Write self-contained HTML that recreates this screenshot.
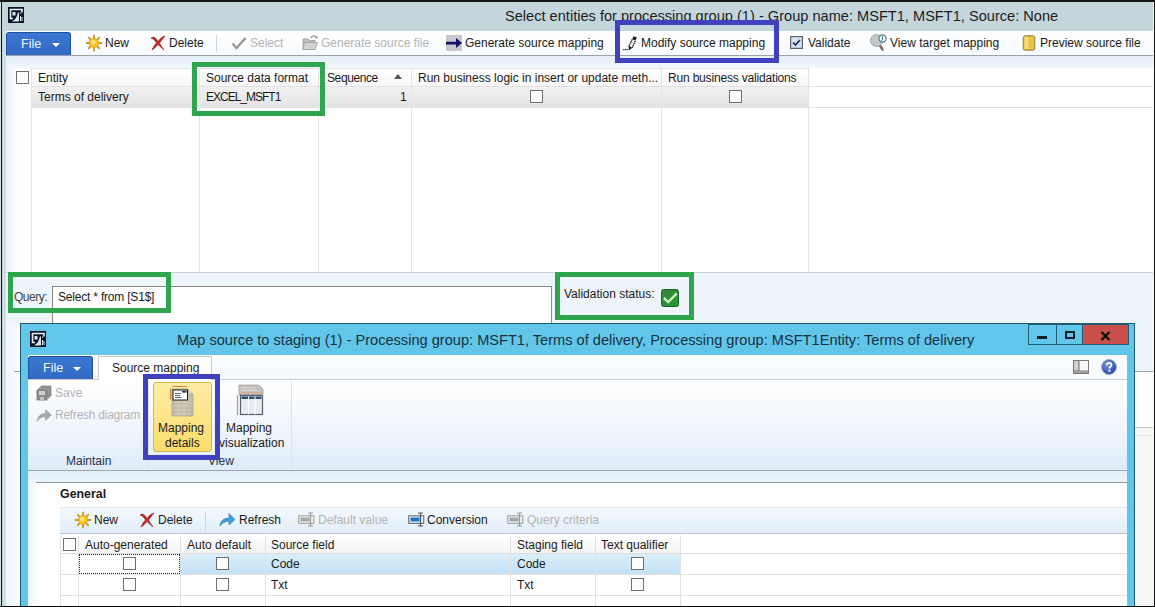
<!DOCTYPE html>
<html><head><meta charset="utf-8">
<style>
*{margin:0;padding:0;box-sizing:border-box}
html,body{width:1155px;height:607px;overflow:hidden;background:#fff}
body{position:relative;font-family:"Liberation Sans",sans-serif;font-size:12px;color:#1a1a1a}
.a{position:absolute}
.t{position:absolute;white-space:nowrap;line-height:14px}
.hl{position:absolute;height:1px}
.vl{position:absolute;width:1px}
.cb{position:absolute;width:13px;height:13px;border:1px solid #707070;background:#fff}
.gbox{position:absolute;border:5px solid #2ea650}
.bbox{position:absolute;border:5px solid #4141bf}
.dis{color:#b4b4b4}
</style></head><body>
<!-- outer frame -->
<div class="a" style="left:0;top:0;width:1155px;height:607px;background:#eef5fa"></div>
<!-- title bar -->
<div class="a" style="left:0;top:0;width:1155px;height:31px;background:#c4d6dc"></div>
<div class="t" style="left:505px;top:7px;font-size:14.6px;line-height:18px;color:#1d1d1d">Select entities for processing group (1) - Group name: MSFT1, MSFT1, Source: None</div>
<!-- app icon -->

<!-- toolbar -->
<div class="a" style="left:2px;top:31px;width:1151px;height:25px;background:linear-gradient(#ffffff,#f7fafd);border-bottom:1px solid #9aa3ab"></div>
<div class="a" style="left:6px;top:32px;width:65px;height:23px;background:linear-gradient(#3b78d2,#3169c4);border:1px solid #1f4f9e;border-bottom:none;border-radius:3px 3px 0 0"></div>
<div class="t" style="left:21px;top:37px;color:#eef6ff;font-size:12.5px">File</div>
<div class="a" style="left:52px;top:43px;width:0;height:0;border-left:4px solid transparent;border-right:4px solid transparent;border-top:4px solid #fff"></div>

<div class="t" style="left:105px;top:36px">New</div>
<div class="t" style="left:169px;top:36px">Delete</div>
<div class="vl" style="left:216px;top:35px;height:17px;background:#d0d5da"></div>
<div class="t dis" style="left:250px;top:36px">Select</div>
<div class="t dis" style="left:321px;top:36px">Generate source file</div>
<div class="t" style="left:465px;top:36px">Generate source mapping</div>
<div class="t" style="left:641px;top:36px">Modify source mapping</div>
<div class="t" style="left:808px;top:36px">Validate</div>
<div class="t" style="left:890px;top:36px">View target mapping</div>
<div class="t" style="left:1040px;top:36px">Preview source file</div>

<!-- content bg gradient below toolbar -->
<div class="a" style="left:2px;top:56px;width:1151px;height:12px;background:linear-gradient(#e3eef8,#f3f8fc)"></div>
<!-- left frame strip -->
<div class="a" style="left:0;top:0;width:1px;height:607px;background:#d8dfe3"></div><div class="a" style="left:1px;top:0;width:1px;height:607px;background:#141414"></div>
<div class="a" style="left:2px;top:31px;width:4px;height:576px;background:linear-gradient(90deg,#c4d5dc,#d6e3e9)"></div>
<div class="a" style="left:1153px;top:0;width:1px;height:607px;background:#f4f6f7"></div><div class="a" style="left:1154px;top:0;width:1px;height:607px;background:#141414"></div>
<div class="a" style="left:0;top:0;width:1155px;height:2px;background:#141414"></div>
<div class="a" style="left:0;top:606px;width:1155px;height:1px;background:#0a0a0a"></div>

<!-- grid -->
<div class="a" style="left:6px;top:68px;width:25px;height:205px;background:linear-gradient(90deg,#e6f1f8,#fbfdfe 10px,#fff)"></div>
<div class="a" style="left:31px;top:68px;width:1122px;height:205px;background:#fff"></div>
<div class="cb" style="left:16px;top:71px"></div>
<div class="a" style="left:31px;top:68px;width:777px;height:19px;background:linear-gradient(#ffffff,#f6f6f6);border-top:1px solid #e4e4e4;border-bottom:1px solid #dcdcdc"></div>
<div class="a" style="left:31px;top:87px;width:777px;height:20px;background:linear-gradient(#f1f1f1,#e3e3e3)"></div>
<div class="hl" style="left:31px;top:86px;width:1122px;background:#e2e2e2"></div>
<div class="hl" style="left:31px;top:107px;width:1122px;background:#e2e2e2"></div>
<div class="vl" style="left:31px;top:68px;height:205px;background:#e4e4e4"></div>
<div class="vl" style="left:199px;top:68px;height:205px;background:#e4e4e4"></div>
<div class="vl" style="left:318px;top:68px;height:205px;background:#e4e4e4"></div>
<div class="vl" style="left:411px;top:68px;height:205px;background:#e4e4e4"></div>
<div class="vl" style="left:661px;top:68px;height:205px;background:#e4e4e4"></div>
<div class="vl" style="left:808px;top:68px;height:205px;background:#e4e4e4"></div>
<div class="hl" style="left:2px;top:272px;width:1151px;background:#c9d0d6"></div>
<div class="t" style="left:38px;top:71px">Entity</div>
<div class="t" style="left:38px;top:90px">Terms of delivery</div>
<div class="t" style="left:206px;top:71px">Source data format</div>
<div class="t" style="left:206px;top:90px;letter-spacing:-1px">EXCEL_MSFT1</div>
<div class="t" style="left:327px;top:71px;letter-spacing:-0.4px">Sequence</div>
<div class="a" style="left:394px;top:74px;width:0;height:0;border-left:4px solid transparent;border-right:4px solid transparent;border-bottom:5px solid #555"></div>
<div class="t" style="left:400px;top:90px">1</div>
<div class="t" style="left:418px;top:71px">Run business logic in insert or update meth...</div>
<div class="t" style="left:668px;top:71px;letter-spacing:-0.18px">Run business validations</div>
<div class="cb" style="left:530px;top:90px"></div>
<div class="cb" style="left:729px;top:90px"></div>

<!-- below grid -->
<div class="a" style="left:6px;top:273px;width:1147px;height:334px;background:#eef5fa"></div>
<div class="t" style="left:14px;top:290px;color:#444;letter-spacing:-0.5px">Query:</div>
<div class="a" style="left:52px;top:286px;width:500px;height:60px;background:#fff;border:1px solid #8a8a8a"></div>
<div class="t" style="left:58px;top:290px;letter-spacing:-0.2px">Select * from [S1$]</div>
<div class="t" style="left:564px;top:287px">Validation status:</div>

<div class="a" style="left:1135px;top:372px;width:18px;height:235px;background:#f8f7f7"></div><div class="a" style="left:6px;top:324px;width:14px;height:283px;background:linear-gradient(90deg,#eef6fb,#fbfdfe)"></div><div class="hl" style="left:1135px;top:371px;width:18px;background:#9aa0a6"></div><div class="a" style="left:1135px;top:372px;width:18px;height:55px;background:#fdfdfc"></div><div class="hl" style="left:1135px;top:427px;width:18px;background:#c9c9c9"></div><div class="hl" style="left:14px;top:371px;width:6px;background:#9aa0a6"></div>
<div class="hl" style="left:1135px;top:435px;width:18px;background:#e2e2e2"></div>


<!-- ICONS -->
<svg class="a" style="left:8px;top:7px" width="16" height="16" viewBox="0 0 16 16">
<rect width="16" height="16" fill="#0b1428"/>
<path d="M2 2.5h12v3M2.5 2v9.5h2.5" stroke="#e6f0f5" stroke-width="1.6" fill="none"/>
<rect x="4.5" y="5" width="3" height="3.5" fill="#dde8ee"/>
<path d="M4 14.5C7 13 9 10 10 5.5L11 5.5 11 14.5Z" fill="#dbe7ee"/>
<rect x="12" y="9" width="1" height="5" fill="#e6f0f5"/><rect x="13.5" y="10" width="1" height="4" fill="#e6f0f5"/>
<rect x="12" y="5.5" width="1.2" height="1.2" fill="#e6f0f5"/>
</svg>
<svg class="a" style="left:85px;top:34px" width="18" height="18" viewBox="0 0 18 18">
<g stroke="#c8962a" stroke-width="1.8" stroke-linecap="round">
<path d="M9 1.5v3M9 13.5v3M1.5 9h3M13.5 9h3M3.7 3.7l2.1 2.1M12.2 12.2l2.1 2.1M3.7 14.3l2.1-2.1M12.2 5.8l2.1-2.1"/></g>
<circle cx="9" cy="9" r="4.6" fill="#f6c21c" stroke="#e5a50f" stroke-width="0.8"/>
<circle cx="8.3" cy="8.2" r="2.2" fill="#ffe680"/>
</svg>
<svg class="a" style="left:149px;top:35px" width="18" height="16" viewBox="0 0 18 16">
<path d="M2 3C5 1 7 3 9 6.5 11 3.5 13.5 1.5 16 1L10.5 8C12 10.5 13.5 13 15 15 12.5 13 10.5 11 9 9.5 7 12 5 14 3 15 4 12.5 5.5 10 7.5 8 6 5.5 4.5 3.5 2 3Z" fill="#c42a2a" stroke="#8a1b1b" stroke-width="0.6"/>
</svg>
<svg class="a" style="left:231px;top:36px" width="16" height="14" viewBox="0 0 16 14">
<path d="M1.5 7.5L5.5 12 14.5 2" stroke="#999" stroke-width="2.6" fill="none" stroke-linejoin="round"/>
</svg>
<svg class="a" style="left:302px;top:34px" width="17" height="17" viewBox="0 0 17 17">
<path d="M1 5h5l1.5 1.5H13v9H1Z" fill="#bdbdbd" stroke="#9a9a9a" stroke-width="0.8"/>
<path d="M2.5 8.5h13L13 15.5H1Z" fill="#d2d2d2" stroke="#a0a0a0" stroke-width="0.8"/>
<path d="M9 4C10 1.5 13 1 14.5 3.5" stroke="#8c8c8c" stroke-width="1.3" fill="none"/><path d="M13 4l2.5 0.5 0-2.5Z" fill="#8c8c8c"/>
</svg>
<svg class="a" style="left:446px;top:35px" width="16" height="16" viewBox="0 0 16 16">
<rect width="16" height="16" fill="#c9c9cc"/>
<path d="M0 6.8h10V3l6 5-6 5V9.5H0Z" fill="#12126e"/>
</svg>
<svg class="a" style="left:622px;top:35px" width="16" height="17" viewBox="0 0 16 17">
<path d="M11.6 1.2L14.8 2.6 13.4 5.6 10.2 4.2Z" fill="#1a1010"/>
<path d="M10.2 4.4L6.9 11.4M13.4 5.8L10.1 12.8" stroke="#111" stroke-width="1.25" stroke-dasharray="1.5 0.6"/>
<path d="M6.6 11L10.3 12.7 7.2 15.2Z" fill="#111"/>
<path d="M8.3 6.5L11 7.7" stroke="#888" stroke-width="0.6"/>
<rect x="1.2" y="14" width="1.2" height="1.2" fill="#111"/><rect x="3.2" y="14" width="1.2" height="1.2" fill="#111"/><rect x="5.2" y="14" width="1.2" height="1.2" fill="#111"/>
</svg>
<svg class="a" style="left:790px;top:36px" width="13" height="13" viewBox="0 0 13 13">
<rect x="0.6" y="0.6" width="11.8" height="11.8" fill="#d6e4f6" stroke="#5e6470" stroke-width="1.2"/>
<path d="M3 6.5l2.5 2.5 4.5-5" stroke="#1d2f66" stroke-width="1.7" fill="none"/>
</svg>
<svg class="a" style="left:869px;top:33px" width="19" height="18" viewBox="0 0 19 18">
<path d="M10 11l3.5 5.5" stroke="#7a6a58" stroke-width="2.4" stroke-linecap="round"/>
<circle cx="7.5" cy="7.5" r="6" fill="#c4c6c8" stroke="#9ea2a5" stroke-width="1"/>
<circle cx="13.5" cy="5.5" r="3.6" fill="#e8fbfb" stroke="#4d7f86" stroke-width="1.2"/>
<path d="M13.5 3.5v3l-1.3 1.3" stroke="#3f6f77" stroke-width="1" fill="none"/>
</svg>
<svg class="a" style="left:1022px;top:35px" width="14" height="16" viewBox="0 0 14 16">
<rect x="1.2" y="0.8" width="11.6" height="14.4" rx="2" fill="#e9c23e" stroke="#8d7c46" stroke-width="1"/>
<rect x="2.5" y="2" width="4" height="12" fill="#f3da7a"/>
</svg>
<!-- validation check -->
<svg class="a" style="left:661px;top:289px" width="18" height="18" viewBox="0 0 18 18">
<defs><linearGradient id="gg" x1="0" y1="0" x2="1" y2="1"><stop offset="0" stop-color="#3f7f40"/><stop offset="1" stop-color="#1f9f2a"/></linearGradient></defs>
<rect x="0.5" y="0.5" width="17" height="17" rx="2" fill="url(#gg)" stroke="#21602a" stroke-width="1"/>
<path d="M2.8 8.8l4.4 4.2 8.6-8.6" stroke="#c9f7bd" stroke-width="2.4" fill="none"/>
</svg>

<!-- highlight boxes main -->
<div class="bbox" style="left:615px;top:20px;width:164px;height:43px"></div>
<div class="gbox" style="left:192px;top:62px;width:133px;height:54px"></div>
<div class="gbox" style="left:8px;top:272px;width:163px;height:41px"></div>
<div class="gbox" style="left:555px;top:272px;width:139px;height:48px"></div>

<!-- dialog -->
<div class="a" style="left:20px;top:323px;width:1115px;height:290px;background:#62c6ea;border:1px solid #1f5c74"></div>
<svg class="a" style="left:30px;top:331px" width="16" height="16" viewBox="0 0 16 16">
<rect width="16" height="16" fill="#0b1428"/>
<path d="M2 2.5h12v3M2.5 2v9.5h2.5" stroke="#e6f0f5" stroke-width="1.6" fill="none"/>
<rect x="4.5" y="5" width="3" height="3.5" fill="#dde8ee"/>
<path d="M4 14.5C7 13 9 10 10 5.5L11 5.5 11 14.5Z" fill="#dbe7ee"/>
<rect x="12" y="9" width="1" height="5" fill="#e6f0f5"/><rect x="13.5" y="10" width="1" height="4" fill="#e6f0f5"/>
<rect x="12" y="5.5" width="1.2" height="1.2" fill="#e6f0f5"/>
</svg>
<div class="t" style="left:177px;top:331px;font-size:14.6px;line-height:18px;color:#17323f">Map source to staging (1) - Processing group: MSFT1, Terms of delivery, Processing group: MSFT1Entity: Terms of delivery</div>
<div class="a" style="left:1028px;top:324px;width:29px;height:21px;border:1px solid #1f5c74"></div>
<div class="a" style="left:1056px;top:324px;width:27px;height:21px;border:1px solid #1f5c74"></div>
<div class="a" style="left:1082px;top:324px;width:47px;height:21px;background:#c9514a;border:1px solid #1f5c74"></div>
<!-- ribbon -->
<div class="a" style="left:28px;top:355px;width:1099px;height:116px;background:linear-gradient(#fafcfe 0,#f7fafd 24px,#ffffff 25px,#f7fafd 45%,#deecf9 100%)"></div>
<div class="hl" style="left:28px;top:379px;width:1099px;background:#c6ccd2"></div>
<div class="hl" style="left:28px;top:470px;width:1099px;background:#9ea6ad"></div>
<div class="a" style="left:28px;top:356px;width:65px;height:23px;background:linear-gradient(#3b78d2,#3169c4);border:1px solid #1f4f9e;border-bottom:none;border-radius:3px 3px 0 0"></div>
<div class="t" style="left:43px;top:361px;color:#eef6ff;font-size:12.5px">File</div>
<div class="a" style="left:73px;top:367px;width:0;height:0;border-left:4px solid transparent;border-right:4px solid transparent;border-top:4px solid #fff"></div>
<div class="a" style="left:98px;top:356px;width:114px;height:24px;background:#fff;border:1px solid #c6ccd2;border-bottom:none"></div>
<div class="t" style="left:112px;top:361px">Source mapping</div>
<div class="t dis" style="left:55px;top:386px">Save</div>
<div class="t dis" style="left:55px;top:408px;letter-spacing:-0.25px">Refresh diagram</div>
<div class="t" style="left:66px;top:454px;color:#1f2f4a">Maintain</div>
<div class="vl" style="left:148px;top:381px;height:88px;background:#dde3e8"></div>
<div class="a" style="left:153px;top:382px;width:59px;height:70px;background:linear-gradient(#fdeda6,#fcdc6c);border:1px solid #d6b552;border-radius:3px"></div>
<div class="t" style="left:158px;top:421px">Mapping</div>
<div class="t" style="left:165px;top:436px">details</div>
<div class="t" style="left:226px;top:421px">Mapping</div>
<div class="t" style="left:219px;top:436px">visualization</div>
<div class="t" style="left:208px;top:454px;color:#1f2f4a">View</div>
<div class="vl" style="left:291px;top:381px;height:88px;background:#dde3e8"></div>

<svg class="a" style="left:36px;top:385px" width="16" height="16" viewBox="0 0 16 16">
<rect x="5" y="1" width="10" height="10" fill="#9a9a9a" stroke="#7e7e7e" stroke-width="0.8"/>
<rect x="3" y="3" width="10" height="10" fill="#a6a6a6" stroke="#7e7e7e" stroke-width="0.8"/>
<rect x="1" y="5" width="10" height="10" fill="#8f8f8f" stroke="#6f6f6f" stroke-width="0.8"/>
<rect x="3" y="6" width="6" height="4" fill="#d0d0d0"/><rect x="4" y="12" width="4" height="3" fill="#c4c4c4"/>
</svg>
<svg class="a" style="left:36px;top:408px" width="16" height="14" viewBox="0 0 16 14">
<path d="M1 13.5C1.5 8 5 5.5 9.5 5.5V1.5L15.5 7 9.5 12.5V8.8C5.5 8.8 3 10.5 1 13.5Z" fill="#a8a8a8" stroke="#9a9a9a" stroke-width="0.5"/>
</svg>
<svg class="a" style="left:169px;top:385px" width="27" height="32" viewBox="0 0 27 32">
<path d="M3 4h16l5 5v22H3Z" fill="#c2bda8" stroke="#aaa58e" stroke-width="0.8"/>
<path d="M19 4v5h5" fill="#dcd8c8" stroke="#aaa58e" stroke-width="0.8"/>
<g stroke="#d8d3bf" stroke-width="0.8"><path d="M5 17h16M5 21h16M5 25h16M5 29h16M10 15v15M15 15v15"/></g>
<rect x="4" y="5" width="14.5" height="10" fill="#fff" stroke="#1a1a1a" stroke-width="1"/>
<rect x="13" y="6" width="4.5" height="1.6" fill="#1a3a6a"/>
<path d="M6 8.5h6M6 10.5h5M6 12.5h6.5" stroke="#333" stroke-width="0.8"/>
<path d="M3 1.5h15M1.5 3.5v11" stroke="#d08a3a" stroke-width="1.2"/>
</svg>
<svg class="a" style="left:236px;top:384px" width="29" height="32" viewBox="0 0 29 32">
<path d="M3 1h20l4 4v6H3Z" fill="#c4c2be" stroke="#a7a39c" stroke-width="0.8"/>
<path d="M5 4h14M5 6.5h16" stroke="#e2e0dc" stroke-width="0.8"/>
<path d="M3 9h24" stroke="#e0a080" stroke-width="1"/>
<rect x="4.5" y="11.5" width="22" height="19" fill="#e8ecf2" stroke="#55606a" stroke-width="1.2"/>
<rect x="5.5" y="12.5" width="20" height="2.5" fill="#2f4f78"/>
<path d="M12.5 12.5v18M19 12.5v18" stroke="#fff" stroke-width="1"/>
<path d="M1.5 11v20" stroke="#d09070" stroke-width="1.2"/>
</svg>
<!-- dialog buttons glyphs -->
<div class="a" style="left:1037px;top:336px;width:10px;height:3px;background:#0f1f2a"></div>
<div class="a" style="left:1065px;top:331px;width:10px;height:8px;border:2px solid #0f1f2a"></div>
<svg class="a" style="left:1100px;top:331px" width="11" height="10" viewBox="0 0 11 10"><path d="M1.5 1l8 8M9.5 1l-8 8" stroke="#111" stroke-width="2.4"/></svg>
<svg class="a" style="left:1073px;top:360px" width="16" height="14" viewBox="0 0 16 14">
<rect x="0.5" y="0.5" width="15" height="13" fill="#f7f7f7" stroke="#7a7a7a" stroke-width="1"/>
<rect x="1" y="1" width="5" height="10" fill="#cfcfcf"/><path d="M6 1v10M1 11h14" stroke="#6a6a6a" stroke-width="1"/>
<rect x="1" y="11.5" width="14" height="1.5" fill="#9a9a9a"/>
</svg>
<svg class="a" style="left:1101px;top:359px" width="16" height="16" viewBox="0 0 16 16">
<defs><radialGradient id="hg" cx="0.4" cy="0.35" r="0.7"><stop offset="0" stop-color="#7a9be0"/><stop offset="1" stop-color="#1f3e9e"/></radialGradient></defs>
<circle cx="8" cy="8" r="7.4" fill="url(#hg)" stroke="#8aa0c8" stroke-width="1"/>
<path d="M5.6 6.2C5.6 4.6 6.8 3.8 8.1 3.8 9.5 3.8 10.5 4.7 10.5 5.9 10.5 7.6 8.4 7.8 8.4 9.6" stroke="#fff" stroke-width="1.7" fill="none"/>
<rect x="7.4" y="10.8" width="2" height="2" fill="#fff"/>
</svg>
<div class="bbox" style="left:143px;top:374px;width:77px;height:86px"></div>

<!-- dialog body -->
<div class="a" style="left:28px;top:471px;width:1099px;height:136px;background:#fff"></div>
<div class="a" style="left:28px;top:471px;width:1099px;height:12px;background:linear-gradient(#e2eef9,#eef5fb)"></div>
<div class="hl" style="left:36px;top:482px;width:1091px;background:#8e969d"></div>
<div class="a" style="left:28px;top:483px;width:10px;height:124px;background:linear-gradient(90deg,#e9f6fb,#fbfdfe)"></div>
<div class="t" style="left:60px;top:487px;font-weight:bold;font-size:12.4px">General</div>
<div class="a" style="left:60px;top:507px;width:1067px;height:27px;background:linear-gradient(#f4f9fe,#e0edf9);border-top:1px solid #dfe6ec;border-bottom:1px solid #bfc8d0"></div>
<div class="t" style="left:94px;top:513px">New</div>
<div class="t" style="left:158px;top:513px">Delete</div>
<div class="vl" style="left:205px;top:511px;height:19px;background:#cdd6de"></div>
<div class="t" style="left:239px;top:513px">Refresh</div>
<div class="t dis" style="left:318px;top:513px">Default value</div>
<div class="t" style="left:427px;top:513px">Conversion</div>
<div class="t dis" style="left:527px;top:513px">Query criteria</div>
<!-- grid 2 -->
<div class="a" style="left:60px;top:535px;width:1067px;height:72px;background:#fff"></div>
<div class="a" style="left:78px;top:535px;width:603px;height:19px;background:linear-gradient(#ffffff,#f4f4f4)"></div>
<div class="cb" style="left:63px;top:538px"></div>
<div class="hl" style="left:60px;top:553px;width:1067px;background:#dcdcdc"></div>
<div class="a" style="left:180px;top:554px;width:501px;height:20px;background:linear-gradient(#dceefa,#c2e2f6)"></div>
<div class="hl" style="left:60px;top:574px;width:1067px;background:#e2e2e2"></div>
<div class="hl" style="left:60px;top:595px;width:1067px;background:#e2e2e2"></div>
<div class="vl" style="left:60px;top:535px;height:72px;background:#e2e2e2"></div>
<div class="vl" style="left:78px;top:535px;height:72px;background:#e2e2e2"></div>
<div class="vl" style="left:180px;top:535px;height:72px;background:#e2e2e2"></div>
<div class="vl" style="left:265px;top:535px;height:72px;background:#e2e2e2"></div>
<div class="vl" style="left:510px;top:535px;height:72px;background:#e2e2e2"></div>
<div class="vl" style="left:595px;top:535px;height:72px;background:#e2e2e2"></div>
<div class="vl" style="left:680px;top:535px;height:72px;background:#e2e2e2"></div>
<div class="a" style="left:79px;top:554px;width:101px;height:20px;border:1px dotted #222"></div>
<div class="t" style="left:85px;top:538px">Auto-generated</div>
<div class="t" style="left:187px;top:538px">Auto default</div>
<div class="t" style="left:271px;top:538px">Source field</div>
<div class="t" style="left:517px;top:538px">Staging field</div>
<div class="t" style="left:601px;top:538px">Text qualifier</div>
<div class="cb" style="left:123px;top:557px"></div>
<div class="cb" style="left:216px;top:557px"></div>
<div class="cb" style="left:631px;top:557px"></div>
<div class="cb" style="left:123px;top:578px"></div>
<div class="cb" style="left:216px;top:578px"></div>
<div class="cb" style="left:631px;top:578px"></div>
<div class="t" style="left:271px;top:557px">Code</div>
<div class="t" style="left:517px;top:557px">Code</div>
<div class="t" style="left:271px;top:578px">Txt</div>
<div class="t" style="left:517px;top:578px">Txt</div>
<!-- general toolbar icons -->
<svg class="a" style="left:74px;top:511px" width="18" height="18" viewBox="0 0 18 18">
<g stroke="#c8962a" stroke-width="1.8" stroke-linecap="round">
<path d="M9 1.5v3M9 13.5v3M1.5 9h3M13.5 9h3M3.7 3.7l2.1 2.1M12.2 12.2l2.1 2.1M3.7 14.3l2.1-2.1M12.2 5.8l2.1-2.1"/></g>
<circle cx="9" cy="9" r="4.6" fill="#f6c21c" stroke="#e5a50f" stroke-width="0.8"/>
<circle cx="8.3" cy="8.2" r="2.2" fill="#ffe680"/>
</svg>
<svg class="a" style="left:138px;top:512px" width="18" height="16" viewBox="0 0 18 16">
<path d="M2 3C5 1 7 3 9 6.5 11 3.5 13.5 1.5 16 1L10.5 8C12 10.5 13.5 13 15 15 12.5 13 10.5 11 9 9.5 7 12 5 14 3 15 4 12.5 5.5 10 7.5 8 6 5.5 4.5 3.5 2 3Z" fill="#c42a2a" stroke="#8a1b1b" stroke-width="0.6"/>
</svg>
<svg class="a" style="left:219px;top:512px" width="17" height="15" viewBox="0 0 17 15">
<path d="M1 14C1.5 8.5 5 6 10 6V1.5L16 7.5 10 13V9.3C6 9.3 3.2 11 1 14Z" fill="#3b9fd6" stroke="#2f7fb0" stroke-width="0.6"/>
</svg>
<svg class="a" style="left:298px;top:512px" width="17" height="15" viewBox="0 0 17 15">
<rect x="0.8" y="3.8" width="15" height="7.5" fill="#f2f2f2" stroke="#9a9a9a" stroke-width="1"/>
<rect x="2.5" y="5.5" width="9" height="4" fill="#a8a8a8"/>
<path d="M10 1h5M12.5 1v13M10 14h5" stroke="#9a9a9a" stroke-width="1.2"/>
</svg>
<svg class="a" style="left:408px;top:512px" width="17" height="15" viewBox="0 0 17 15">
<rect x="0.8" y="3.8" width="15" height="7.5" fill="#eaf6ff" stroke="#5a5a5a" stroke-width="1"/>
<rect x="2.5" y="5.5" width="9" height="4" fill="#1c78c8"/>
<path d="M10 1h5M12.5 1v13M10 14h5" stroke="#555" stroke-width="1.2"/>
</svg>
<svg class="a" style="left:507px;top:512px" width="17" height="15" viewBox="0 0 17 15">
<rect x="0.8" y="3.8" width="15" height="7.5" fill="#f2f2f2" stroke="#9a9a9a" stroke-width="1"/>
<rect x="2.5" y="5.5" width="9" height="4" fill="#a8a8a8"/>
<path d="M10 1h5M12.5 1v13M10 14h5" stroke="#9a9a9a" stroke-width="1.2"/>
</svg>
<!-- bottom border on top -->
<div class="a" style="left:0;top:606px;width:1155px;height:1px;background:#0a0a0a"></div>
</body></html>
